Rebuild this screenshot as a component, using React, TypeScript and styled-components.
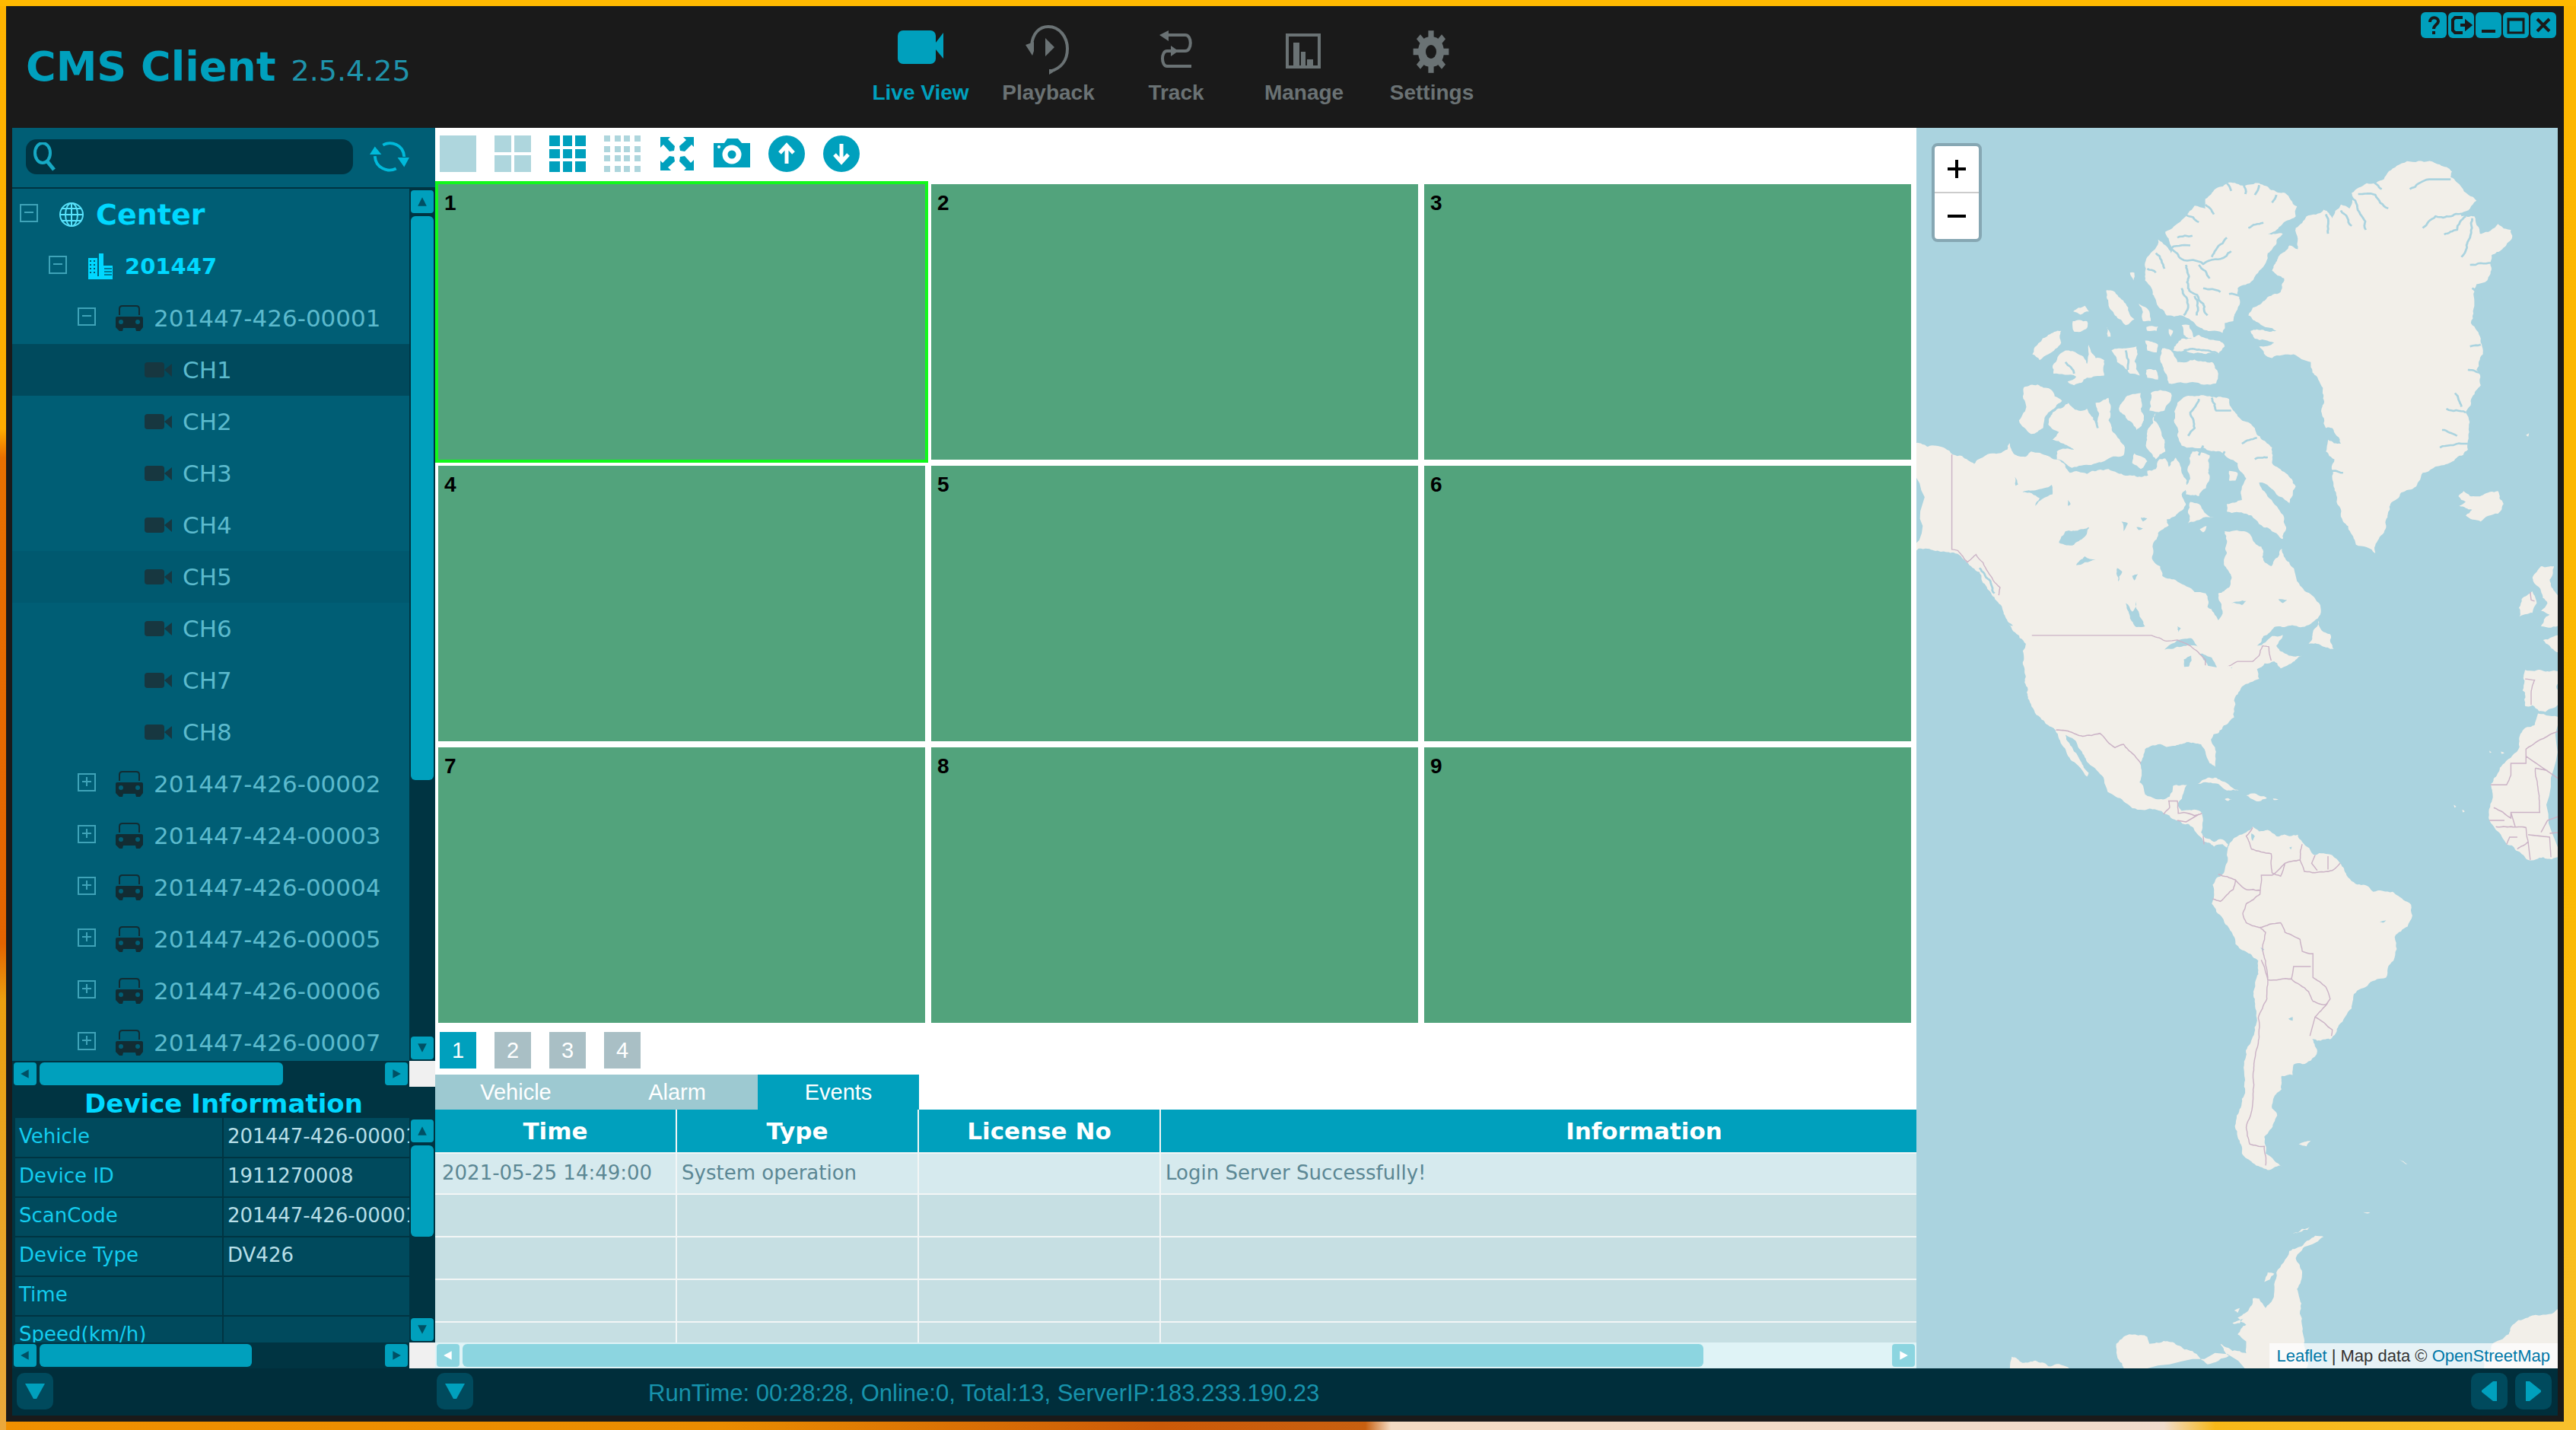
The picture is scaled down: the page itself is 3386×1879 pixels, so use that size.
import React, { useState } from "react";
import styled, { createGlobalStyle, css } from "styled-components";

const c = {
  frame: "#1a1a1a",
  panel: "#005e75",
  deep: "#003442",
  status: "#002e3b",
  row: "#004a5d",
  hover: "#00596f",
  accent: "#00a0bd",
  bright: "#00d8ff",
  soft: "#5cbacd",
  water: "#aad3df",
  land: "#f2efe9",
  grey: "#6a7274",
};

const verdana = `Verdana, "DejaVu Sans", sans-serif`;
const arial = `Arial, "Liberation Sans", sans-serif`;

const Global = createGlobalStyle`
  *, *::before, *::after { box-sizing: border-box; }
  html, body, #root { height: 100%; margin: 0; }
  body { overflow: hidden; font-family: ${arial}; }
  button { appearance: none; border: 0; margin: 0; padding: 0; background: none; color: inherit; font: inherit; cursor: pointer; }
  svg { display: block; flex: none; }
`;

/* ---------- shell ---------- */

const Desktop = styled.div`
  display: flex;
  height: 100vh;
  padding: 8px 16px 11px 8px;
  background:
    linear-gradient(#ffb900, #ffb900) top / 100% 8px no-repeat,
    linear-gradient(#fdb600 0%, #fbb800 60%, #f8c02c 100%) right / 16px 100% no-repeat,
    linear-gradient(#ffb400 0%, #ffac00 30%, #e87000 32%, #e46400 66%, #eaa010 70%, #eaa83c 100%) left / 8px 100% no-repeat,
    linear-gradient(90deg, #f09000 0%, #ea8c00 28%, #cc5a08 45%, #c86010 53%, #f4dcc4 54%, #f0dccc 84%, #f8b818 86%, #f8c02c 100%);
`;

const Window = styled.div`
  flex: 1;
  min-width: 0;
  display: flex;
  flex-direction: column;
  padding: 0 8px 8px;
  background: ${c.frame};
`;

const Header = styled.header`
  display: flex;
  align-items: flex-start;
  height: 160px;
`;

const Brand = styled.h1`
  flex: 0 0 1110px;
  display: flex;
  align-items: baseline;
  gap: 20px;
  margin: 0;
  padding: 48px 0 0 18px;
  color: ${c.accent};
  font: bold 54px/64px ${verdana};
  small { padding-top: 10px; font: 38px/44px ${verdana}; color: #1f93aa; }
`;

const Nav = styled.nav`
  display: flex;
  flex: 1;
`;

const NavItem = styled.button<{ $active?: boolean }>`
  width: 168px;
  padding-top: 18px;
  color: ${(p) => (p.$active ? c.accent : c.grey)};
  font: bold 28px/32px ${arial};
  svg { margin: 0 auto; }
`;

const WindowButtons = styled.div`
  display: flex;
  gap: 2px;
  padding: 8px 2px 0 0;
`;

const WindowButton = styled.button`
  width: 34px;
  height: 34px;
  border-radius: 6px;
  background: ${c.accent};
  color: ${c.frame};
`;

const Main = styled.main`
  flex: 1;
  min-height: 0;
  display: grid;
  grid-template-columns: 556px minmax(0, 1fr) 843px;
  grid-template-rows: minmax(0, 1fr);
`;

/* ---------- scroll bars ---------- */

type BarProps = { $vertical?: boolean; $light?: boolean };

const Bar = styled.div<BarProps>`
  display: flex;
  flex: none;
  gap: 4px;
  padding: 2px;
  background: ${(p) => (p.$light ? "#dff3f6" : c.deep)};
  flex-direction: ${(p) => (p.$vertical ? "column" : "row")};
  ${(p) => (p.$vertical ? css`width: 34px;` : css`height: 34px;`)}
`;

const BarButton = styled.button<{ $light?: boolean }>`
  display: grid;
  place-items: center;
  flex: none;
  width: 30px;
  height: 30px;
  border-radius: 4px;
  background: ${(p) => (p.$light ? "#8cd5e0" : c.accent)};
  color: ${(p) => (p.$light ? "#fff" : "#005064")};
`;

const Track = styled.div<BarProps>`
  flex: 1;
  display: flex;
  min-width: 0;
  min-height: 0;
  flex-direction: ${(p) => (p.$vertical ? "column" : "row")};
`;

const Thumb = styled.div<{ $light?: boolean; $share: number }>`
  flex: 0 0 ${(p) => p.$share}%;
  border-radius: 6px;
  background: ${(p) => (p.$light ? "#8cd5e0" : c.accent)};
`;

const Corner = styled.div`
  width: 34px;
  height: 34px;
  background: #f0f0f0;
`;

const Arrow = ({ dir }: { dir: "up" | "down" | "left" | "right" }) => {
  const d = { up: "M1 11 6 1l5 10z", down: "M1 1h10L6 11z", left: "M10 1v10L1 6z", right: "M2 1v10l9-5z" }[dir];
  return (
    <svg width="14" height="14" viewBox="0 0 12 12" fill="currentColor"><path d={d} /></svg>
  );
};

const ScrollBar = ({ vertical, light, share }: { vertical?: boolean; light?: boolean; share: number }) => (
  <Bar $vertical={vertical} $light={light}>
    <BarButton $light={light} aria-label={vertical ? "Scroll up" : "Scroll left"}><Arrow dir={vertical ? "up" : "left"} /></BarButton>
    <Track $vertical={vertical}><Thumb $light={light} $share={share} /></Track>
    <BarButton $light={light} aria-label={vertical ? "Scroll down" : "Scroll right"}><Arrow dir={vertical ? "down" : "right"} /></BarButton>
  </Bar>
);

/* ---------- sidebar ---------- */

const Sidebar = styled.aside`
  display: flex;
  flex-direction: column;
  min-height: 0;
  background: ${c.deep};
`;

const SearchRow = styled.div`
  display: flex;
  align-items: center;
  justify-content: space-between;
  height: 80px;
  padding: 0 34px 2px 18px;
  background: ${c.panel};
  border-bottom: 2px solid ${c.deep};
`;

const SearchBox = styled.label`
  display: flex;
  align-items: center;
  width: 430px;
  height: 46px;
  padding: 0 10px;
  gap: 8px;
  border-radius: 14px;
  background: ${c.deep};
  input { flex: 1; min-width: 0; border: 0; outline: 0; background: none; color: ${c.soft}; font: 26px/32px ${verdana}; }
`;

const ScrollPane = styled.div<{ $grow?: boolean }>`
  display: grid;
  grid-template-columns: minmax(0, 1fr) 34px;
  grid-template-rows: minmax(0, 1fr) 34px;
  ${(p) => (p.$grow ? css`flex: 1; min-height: 0;` : css`height: 329px;`)}
`;

const Tree = styled.ul`
  margin: 0;
  padding: 0;
  overflow: hidden;
  list-style: none;
  background: ${c.panel};
`;

const Node = styled.li<{ $level: number; $state?: string }>`
  display: flex;
  align-items: center;
  height: 68px;
  padding-left: ${(p) => 10 + p.$level * 38}px;
  white-space: nowrap;
  color: ${(p) => (p.$level < 2 ? c.bright : c.soft)};
  font: ${(p) => (p.$level === 0 ? "bold 38px" : p.$level === 1 ? "bold 29px" : "31px")} / 40px ${verdana};
  background: ${(p) => (p.$state === "selected" ? c.row : p.$state === "hover" ? c.hover : "transparent")};
`;

const Toggle = styled.button`
  width: 24px;
  height: 24px;
  margin: 0 26px 4px 0;
`;

const Spacer = styled.span`
  width: 50px;
`;

const IconSlot = styled.span`
  display: grid;
  place-items: center;
  width: 36px;
  margin-right: 14px;
`;

const DeviceTitle = styled.h2`
  margin: 0;
  height: 41px;
  color: ${c.bright};
  font: bold 34px/44px ${verdana};
  text-align: center;
  padding-right: 14px;
  padding-left: 14px;
`;

const Clip = styled.div`
  overflow: hidden;
  min-height: 0;
  padding-left: 4px;
`;

const DeviceTable = styled.table`
  width: 740px;
  table-layout: fixed;
  border-collapse: collapse;
  font: 26px/32px ${verdana};
  color: #b7dfe8;
  th { width: 273px; font-weight: normal; text-align: left; color: #13cdef; border-right: 2px solid ${c.deep}; }
  th, td { height: 52px; padding: 0 5px 4px; background: ${c.row}; border-bottom: 2px solid ${c.deep}; white-space: nowrap; }
`;

/* ---------- video area ---------- */

const Center = styled.section`
  display: flex;
  flex-direction: column;
  min-width: 0;
  min-height: 0;
  background: #fff;
`;

const Toolbar = styled.div`
  display: flex;
  gap: 24px;
  height: 70px;
  padding: 10px 6px 0;
`;

const Tool = styled.button<{ $dim?: boolean }>`
  width: 48px;
  height: 48px;
  color: ${(p) => (p.$dim ? "#aed6dd" : c.accent)};
`;

const Grid = styled.div`
  flex: 1;
  min-height: 0;
  display: grid;
  grid-template-columns: repeat(3, 1fr);
  grid-template-rows: repeat(3, 1fr);
  gap: 8px;
  padding: 4px 7px 4px 4px;
`;

const Cell = styled.div<{ $selected: boolean }>`
  padding: 8px;
  background: #52a37c;
  outline: ${(p) => (p.$selected ? "4px solid #12f81c" : "none")};
  color: #000;
  font: bold 28px/34px ${arial};
`;

const Pager = styled.div`
  display: flex;
  gap: 24px;
  height: 64px;
  padding: 8px 6px;
`;

const Page = styled.button<{ $active?: boolean }>`
  width: 48px;
  height: 48px;
  background: ${(p) => (p.$active ? c.accent : "#a9bfc5")};
  color: #fff;
  font: 29px/48px ${arial};
`;

const Tabs = styled.div`
  display: flex;
  height: 46px;
`;

const Tab = styled.button<{ $active?: boolean }>`
  width: 212px;
  background: ${(p) => (p.$active ? c.accent : "#9dc9d1")};
  color: #fff;
  font: 29px/46px ${arial};
`;

const EventsClip = styled.div`
  height: 306px;
  overflow: hidden;
`;

const EventsTable = styled.table`
  width: 2226px;
  table-layout: fixed;
  border-collapse: separate;
  border-spacing: 0;
  th, td { padding: 0 6px 2px; border-right: 2px solid #f3f6f6; border-bottom: 2px solid #f3f6f6; white-space: nowrap; }
  th { height: 58px; padding: 0 6px; background: ${c.accent}; color: #fff; font: bold 31px/40px ${verdana}; }
  td { height: 56px; background: #c6dfe3; color: #5b8794; font: 26px/32px ${verdana}; }
  tbody tr:first-child td { height: 54px; background: #d6eaee; }
  td:first-child { padding-left: 9px; }
`;

const Col = styled.col<{ $w: number }>`
  width: ${(p) => p.$w}px;
`;

/* ---------- map ---------- */

const MapPane = styled.section`
  position: relative;
  overflow: hidden;
  background: ${c.water};
  > svg { width: 100%; height: 100%; }
`;

const ZoomControl = styled.div`
  position: absolute;
  top: 20px;
  left: 20px;
  width: 66px;
  border: 4px solid #86a7b3;
  border-radius: 8px;
  background: #fff;
`;

const ZoomButton = styled.button`
  display: grid;
  place-items: center;
  width: 58px;
  height: 60px;
  & + & { height: 62px; border-top: 2px solid #ccc; }
`;

const Attribution = styled.div`
  position: absolute;
  right: 0;
  bottom: 0;
  padding: 0 10px;
  background: rgba(255, 255, 255, 0.7);
  color: #333;
  font: 22px/33px ${arial};
  a { color: #0078a8; text-decoration: none; }
`;

/* ---------- status bar ---------- */

const StatusBar = styled.footer`
  display: flex;
  align-items: flex-start;
  height: 62px;
  padding: 6px 8px 0 6px;
  background: ${c.status};
  color: #1793ac;
`;

const SideSlot = styled.div`
  width: 552px;
`;

const StatusText = styled.p`
  flex: 1;
  margin: 0;
  padding: 8px 0 0 230px;
  font: 31px/38px ${arial};
`;

const StatusButton = styled.button`
  display: grid;
  place-items: center;
  width: 48px;
  height: 48px;
  border-radius: 10px;
  background: ${c.row};
  color: ${c.accent};
  & + & { margin-left: 10px; }
`;

/* ---------- icons ---------- */

const VideoIcon = () => (
  <svg width="64" height="80" viewBox="0 0 64 80" fill="currentColor">
    <rect x="2" y="14" width="50" height="44" rx="7" /><path d="M50 30h2l10-13v34L52 39h-2z" />
  </svg>
);
const PlaybackIcon = () => (
  <svg width="64" height="80" viewBox="0 0 64 80" fill="currentColor">
    <g transform="translate(0 -4)">
      <path d="M10 38C11 22 20 13 32 13c15 0 25 14 25 29 0 15-8 26-23 30" fill="none" stroke="currentColor" strokeWidth="4" />
      <path d="M2 37 13 33v12l-2 6zM28 28l12 12-12 12zM33 69h5v4l-5 3z" />
    </g>
  </svg>
);
const TrackIcon = () => (
  <svg width="64" height="80" viewBox="0 0 64 80" fill="currentColor">
    <path d="M16 20h28c9 0 9 21 0 21H20c-8 0-8 20 0 20h32" fill="none" stroke="currentColor" strokeWidth="4" />
    <path d="M10 20 22 14v14zM25 34l10 7-10 7z" />
  </svg>
);
const ManageIcon = () => (
  <svg width="64" height="80" viewBox="0 0 64 80" fill="currentColor">
    <path d="M8 18h46v46H8zM12 22v38h38V22z" fillRule="evenodd" />
    <path d="M18 30h8v30h-8zM28 42h6v18h-6zM36 52h8v8h-8z" />
  </svg>
);
const SettingsIcon = () => (
  <svg width="64" height="80" viewBox="0 0 64 80" fill="currentColor">
    <g transform="translate(31 42)">
      {[0, 45, 90, 135].map((a) => <rect key={a} x="-4" y="-26" width="8" height="52" transform={`scale(.9 1.07) rotate(${a})`} />)}
      <path fillRule="evenodd" d="M0-20C11-20 17-11 17 0S11 20 0 20-17 11-17 0-11-20 0-20zM0-9c-4 0-7 4-7 9s3 9 7 9 7-4 7-9-3-9-7-9z" />
      <ellipse rx="7" ry="9" fill={c.frame} />
    </g>
  </svg>
);

const SearchIcon = () => (
  <svg width="30" height="38" viewBox="0 0 30 38" fill="none" stroke="#17a9c4" strokeWidth="4">
    <ellipse cx="12" cy="14" rx="10" ry="13" /><path d="m18 25 9 11" strokeWidth="5" />
  </svg>
);
const RefreshIcon = () => (
  <svg width="52" height="42" viewBox="0 0 54 42" fill="none" stroke="#00bada" strokeWidth="4">
    <path d="M18 5c11-6 28-1 29 16M36 37C24 43 8 36 7 20" /><path d="m0 18 7-11 9 11zM38 22l9 13 7-13z" fill="#00bada" stroke="none" />
  </svg>
);
const GlobeIcon = () => (
  <svg width="32" height="32" viewBox="0 0 32 32" fill="none" stroke="#58e2fb" strokeWidth="2">
    <circle cx="16" cy="16" r="15" /><ellipse cx="16" cy="16" rx="8" ry="15" /><path d="M16 1v30M1 16h30M4 8h24M4 24h24" />
  </svg>
);
const BuildingIcon = () => (
  <svg width="34" height="36" viewBox="0 0 34 36">
    <path d="M1 7h12v24h2V1h6v16h12v18H1z" fill={c.bright} />
    <path d="M4 10v20M9 10v20" stroke={c.panel} strokeWidth="2" strokeDasharray="2 3" />
    <path d="M22 21h10M22 25h10M22 29h10" stroke={c.panel} strokeWidth="1.5" />
  </svg>
);
const CarIcon = () => (
  <svg width="36" height="36" viewBox="0 0 36 36">
    <path d="M5 14V6c0-3 2-4 4-4h18c3 0 4 1 4 4v8" fill="none" stroke="#122c33" strokeWidth="2" />
    <path d="M0 18q0-2 2-2h32q2 0 2 2v12l-4 5h-5l-1-4H10l-1 4H5L0 30z" fill="#122c33" />
    <circle cx="7" cy="23" r="3" fill={c.panel} /><circle cx="29" cy="23" r="3" fill={c.panel} />
  </svg>
);
const CamIcon = () => (
  <svg width="36" height="24" viewBox="0 0 36 24" fill="#173740">
    <rect y="2" width="26" height="20" rx="4" /><path d="M26 12 36 4v17z" />
  </svg>
);
const BoxIcon = ({ open }: { open: boolean }) => (
  <svg width="24" height="24" viewBox="0 0 24 24" fill="none" stroke="#3fa3b8" strokeWidth="2">
    <path d="M1 1h22v22H1zM6 11h12" />{!open && <path d="M12 5v12" />}
  </svg>
);

const Tiles = ({ starts, sizes }: { starts: number[]; sizes: number[] }) => (
  <svg width="48" height="48" viewBox="0 0 48 48" fill="currentColor">
    {starts.flatMap((y, r) => starts.map((x, k) => <rect key={`${r}-${k}`} x={x} y={y} width={sizes[k]} height={sizes[r]} />))}
  </svg>
);
const ExpandIcon = () => (
  <svg width="48" height="48" viewBox="0 0 48 48" fill="currentColor">
    {[0, 90, 180, 270].map((a) => <path key={a} transform={`rotate(${a} 24 24)`} d="M2 2h13l-3 3 9 9-1 6-6 1-8-9-4 4z" />)}
  </svg>
);
const CameraIcon = () => (
  <svg width="48" height="48" viewBox="0 0 48 48">
    <path d="M0 10h14l4-6h14l5 6h11v32H0z" fill="currentColor" />
    <circle cx="24" cy="25" r="9" fill="none" stroke="#fff" strokeWidth="7" /><circle cx="7" cy="15" r="2" fill="#fff" />
  </svg>
);
const CircleArrow = ({ down }: { down?: boolean }) => (
  <svg width="48" height="48" viewBox="0 0 48 48">
    <circle cx="24" cy="24" r="24" fill="currentColor" />
    <path transform={down ? "rotate(180 24 24)" : undefined} d="M24 37V13M15 23l9-10 9 10" fill="none" stroke="#fff" strokeWidth="5" />
  </svg>
);

const windowGlyphs: [string, React.ReactNode][] = [
  ["Help", <path d="M12 13c0-8 11-7 11-1 0 4-6 5-6 10M17 25v4" />],
  ["Log out", <path d="M19 7H9l-3 3v14l3 3h10M16 17h12M24 13l5 4-5 4z" />],
  ["Minimize", <path d="M8 25h18" />],
  ["Maximize", <path d="M7 9h20v18H7zM7 10h20" />],
  ["Close", <path d="m9 9 16 16M25 9 9 25" />],
];

/* ---------- map drawing ---------- */

type Pt = [number, number];
const parse = (s: string): Pt[] => s.trim().split(/\s+/).map((p) => p.split(",").map(Number) as Pt);

/* Breaks every side of an outline into short jagged pieces so that it reads as a coast. */
const coast = (s: string, closed = true, amount = 0.13) => {
  const pts = parse(s);
  let seed = Math.abs(pts[0][0] * 31 + pts[0][1] * 17) + 7;
  const rand = () => {
    seed = (seed * 16807) % 2147483647;
    return (seed / 2147483647) * 2 - 1;
  };
  const out: Pt[] = [];
  const split = (a: Pt, b: Pt, depth: number) => {
    const dx = b[0] - a[0];
    const dy = b[1] - a[1];
    if (depth === 0 || Math.hypot(dx, dy) < 7) {
      out.push(b);
      return;
    }
    const k = rand() * amount;
    const m: Pt = [(a[0] + b[0]) / 2 - dy * k, (a[1] + b[1]) / 2 + dx * k];
    split(a, m, depth - 1);
    split(m, b, depth - 1);
  };
  out.push(pts[0]);
  const n = closed ? pts.length : pts.length - 1;
  for (let i = 0; i < n; i++) {
    const a = pts[i];
    const b = pts[(i + 1) % pts.length];
    /* surveyed borders stay straight over long distances */
    const straight = !closed && (a[0] === b[0] || a[1] === b[1]);
    split(a, b, straight ? 0 : 4);
  }
  return "M" + out.map((p) => `${p[0].toFixed(1)} ${p[1].toFixed(1)}`).join("L") + (closed ? "z" : "");
};

const northLand = [
  "20,825 33,828 60,838 100,842 118,858 140,862 168,882 178,870 195,860 215,855 245,845 250,828 262,858 290,862 300,850 340,862 375,880 390,905 430,908 455,898 480,895 500,905 540,912 572,912 570,900 590,895 598,870 612,868 620,890 636,866 645,880 650,905 662,925 665,945 650,960 660,985 640,1010 615,1025 620,1040 595,1060 583,1090 583,1130 600,1145 605,1170 640,1185 680,1212 706,1215 710,1250 735,1284 745,1260 735,1215 760,1200 765,1170 748,1140 755,1110 750,1055 795,1055 820,1085 835,1095 840,1130 858,1145 875,1120 883,1100 900,1135 915,1170 925,1195 958,1225 972,1245 972,1270 940,1298 865,1302 840,1325 825,1350 860,1325 885,1322 870,1350 890,1370 930,1375 880,1408 872,1395 865,1390 825,1410 830,1435 790,1455 780,1475 765,1480 775,1500 770,1525 735,1575 360,1575 350,1560 325,1540 300,1500 290,1470 285,1420 288,1345 265,1310 248,1290 235,1260 215,1225 195,1195 180,1160 150,1135 120,1110 90,1108 60,1100 20,1110",
  "865,370 900,320 920,330 915,275 940,245 980,228 1000,250 1020,215 1040,225 1045,185 1080,160 1120,150 1150,115 1200,103 1250,112 1278,130 1275,145 1300,170 1335,205 1320,225 1300,238 1300,245 1330,245 1345,290 1385,265 1415,280 1418,300 1395,330 1370,345 1370,380 1360,410 1335,420 1330,470 1322,520 1345,560 1350,600 1335,640 1345,680 1325,710 1310,750 1318,800 1315,845 1260,885 1210,905 1195,940 1135,985 1125,1040 1108,1075 1100,1112 1055,1090 1025,1030 1010,980 1000,920 1005,870 985,850 990,820 1020,830 1000,790 985,790 975,740 970,670 950,620 910,600 860,610 830,580 865,570 820,560 810,540 870,540 830,520 805,500 815,480 880,440 888,405 860,385",
  "565,390 570,350 595,305 625,340 625,320 612,285 650,255 680,218 705,225 705,200 760,158 830,160 890,185 918,220 915,245 880,270 850,290 885,290 850,340 830,385 815,410 780,430 785,460 770,515 750,520 745,545 720,540 690,530 650,500 615,500 590,460 580,430 565,410",
  "605,585 625,590 640,620 720,620 735,650 730,675 620,675 608,640",
  "630,590 650,560 690,550 745,570 750,580 735,600 660,590",
  "475,435 495,440 520,470 540,510 520,525 495,500 480,470",
  "550,470 575,490 578,515 560,515", "398,490 425,475 435,490 415,498", "397,515 430,515 428,535 400,542",
  "303,600 340,550 370,540 370,570 340,600 320,615",
  "350,630 380,590 410,600 430,625 435,575 450,610 470,615 470,655 430,660 400,680 385,670 405,658 352,650",
  "487,590 520,585 545,580 553,655 530,650 500,620", "565,565 595,575 592,595 570,590", "568,530 595,528 592,540 570,540",
  "568,640 590,640 595,665 570,660", "530,390 540,390 538,410", "620,535 630,540 625,555", "650,525 668,525 680,560 655,550", "472,525 485,555 478,555",
  "283,685 315,678 345,690 372,720 340,750 328,790 300,805 272,770 288,730",
  "340,780 350,750 385,725 410,745 430,740 445,765 455,780 450,725 480,712 485,740 480,770 490,800 518,840 515,860 470,875 440,885 395,892 360,870 360,850 400,845 350,820 365,800",
  "505,745 520,710 555,700 555,740 562,770 545,795 525,770", "578,700 600,692 625,700 610,745 575,745",
  "585,770 610,820 612,850 590,870 568,840 570,800 590,750",
  "632,770 640,725 660,708 680,708 720,710 760,715 770,745 820,790 860,840 860,880 915,940 900,985 870,960 830,930 888,1020 885,1075 840,1045 800,1010 755,1005 755,985 790,975 790,940 800,920 780,880 740,850 700,840 650,835 640,810",
  "665,1035 670,980 690,985 725,1020 700,1020 680,1030", "675,850 715,860 715,920 690,965 660,960 670,920", "760,900 780,905 775,925 760,925",
  "540,855 570,875 555,895 535,880", "692,1050 708,1042 700,1058",
  "945,1345 968,1285 975,1310 995,1320 1003,1358 975,1350", "248,1295 270,1305 298,1335 275,1325",
  "1293,965 1305,952 1320,965 1350,962 1385,952 1398,985 1385,1010 1345,1030 1310,1015 1325,1000 1295,990 1310,980",
  "1440,1230 1465,1210 1475,1240 1465,1265 1435,1275",
  "1465,1175 1485,1145 1515,1145 1505,1180 1520,1215 1530,1230 1530,1295 1485,1300 1505,1270 1485,1260 1500,1240 1485,1210 1470,1190",
  "1490,1335 1530,1320 1530,1368 1505,1350", "1448,1412 1470,1415 1530,1415 1530,1495 1495,1520 1480,1518 1465,1503 1448,1505 1448,1470 1442,1465",
  "1450,808 1457,803 1455,812",
];

const northWater = [
  "610,1360 640,1335 670,1330 688,1352 650,1352", "655,1385 672,1375 668,1400 665,1435 653,1430", "690,1370 720,1380 732,1405 712,1412 705,1390",
  "700,1440 740,1410 768,1405 740,1425", "520,1240 535,1262 545,1235 552,1270 565,1300 545,1302 530,1275", "365,1085 380,1055 435,1045 400,1090",
  "280,955 310,950 348,936 350,960 310,990 320,970", "405,1143 425,1120 450,1128 425,1135", "500,1150 512,1160 503,1185", "535,1170 548,1165 540,1182",
  "510,1030 525,1035 515,1055", "555,1020 570,1022 560,1030", "640,1300 648,1305 642,1315", "765,1240 800,1235 790,1245", "875,1230 895,1232 885,1240",
  "398,1440 408,1452 402,1452", "545,1045 560,1048 550,1052", "262,915 270,935 264,938", "385,975 392,985 386,990",
];

const fjords = [
  "625,330 650,355 700,368 740,355 765,335", "660,370 665,430 700,470 710,500", "620,330 670,320", "690,370 715,405", "720,350 745,315 755,300",
  "650,430 665,480 655,500", "700,430 740,440", "805,275 840,262", "590,340 610,380", "570,380 590,390", "755,160 765,180", "795,162 798,188", "830,165 820,190",
  "660,240 690,260", "705,215 725,240", "870,190 860,210", "640,300 675,295", "680,450 685,500", "760,445 785,450",
  "1060,188 1100,190 1130,225", "1045,195 1065,240 1078,280", "985,240 990,290", "1020,230 1045,270", "1180,175 1225,150 1275,150", "1090,155 1115,175",
  "1210,275 1240,245 1310,240", "1260,292 1290,280 1310,245", "1325,250 1320,300 1300,350", "1340,250 1345,290", "1320,370 1370,365", "1325,430 1350,460",
  "1250,840 1300,830 1315,830", "1255,795 1290,810", "1265,740 1310,750", "1285,700 1300,735", "1320,580 1345,575", "1315,640 1350,650",
  "690,715 670,750 680,790 665,810", "720,712 730,745 765,745", "790,830 825,815", "750,850 740,880", "820,870 850,865", "690,860 700,835",
  "655,590 735,600", "345,750 385,725", "445,765 455,790", "380,620 400,650", "520,590 525,640", "870,965 900,985", "1000,900 1025,905", "180,1150 215,1215",
];

const northBorders = [
  "116,858 116,1102 130,1105 152,1135 172,1115 200,1160 228,1200 225,1220", "302,1323 580,1323 615,1338 640,1335 670,1350 705,1385 705,1440 740,1412 780,1390 815,1390 830,1375 838,1350 852,1352 858,1388",
  "1448,1435 1470,1438 1462,1470 1462,1502", "1460,1212 1462,1232 1470,1235",
];

const southLand = [
  "285,-60 285,-5 300,25 320,60 345,82 358,95 375,130 395,160 415,175 430,193 434,185 415,160 400,140 382,115 380,105 400,115 420,145 440,170 470,200 478,225 515,245 560,263 590,262 615,272 640,285 665,292 685,312 700,328 725,340 745,335 755,342 758,335 745,325 725,330 705,322 695,310 697,270 680,262 650,265 640,250 655,225 662,210 630,212 622,235 590,240 565,230 552,205 553,165 565,135 595,125 635,128 665,120 695,125 705,140 715,165 728,172 728,150 718,115 725,100 750,85 772,68 768,45 778,20 785,0 760,-40",
  "758,340 780,318 800,310 815,298 830,308 850,305 870,318 900,318 920,315 930,330 960,358 1000,358 1018,375 1033,400 1050,415 1085,425 1095,435 1140,435 1165,452 1183,462 1186,485 1175,508 1145,530 1142,580 1125,615 1085,628 1050,650 1045,680 1015,715 995,745 965,748 950,742 965,770 950,790 910,798 908,820 882,822 882,850 862,875 860,890 872,905 855,935 842,950 845,985 865,1000 885,1012 850,1020 815,1005 790,985 780,950 778,905 790,870 795,800 815,740 820,660 828,600 828,580 775,545 745,490 720,460 725,435 722,420 745,398 757,370 757,345",
  "1530,67 1478,60 1470,85 1440,100 1435,130 1400,165 1368,210 1372,240 1365,285 1380,305 1405,335 1455,368 1490,362 1530,362",
  "934,1385 928,1300 918,1270 930,1235 915,1205 940,1180 980,1160 960,1158 900,1190 870,1235 865,1260 855,1300 845,1310 830,1290 815,1290 805,1315 780,1330 800,1345 780,1365 800,1380 800,1405 740,1385 760,1410 710,1428 675,1400 640,1388 575,1385 570,1370 515,1370 498,1385 500,1410 515,1445 940,1445",
  "255,1412 280,1425 310,1420 340,1432 380,1432 395,1445 252,1445", "1530,1308 1510,1322 1455,1330 1415,1350 1410,1365 1370,1388 1350,1445 1530,1445",
  "688,208 715,195 745,203 785,222 755,222 735,208 700,205", "800,232 820,228 848,238 820,243", "750,240 758,238 767,241 758,244", "862,239 875,241 864,242",
  "922,965 950,958 940,970", "1155,996 1175,1008 1165,1003", "842,1255 850,1235 865,1238 855,1250", "768,1342 795,1332 785,1342", "772,1315 785,1310 780,1320",
  "905,1155 955,1135 925,1150", "1072,1108 1088,1110 1075,1110", "1282,252 1288,256 1284,258", "1302,262 1308,266 1303,268", "1365,138 1370,142 1366,143", "1392,140 1400,143 1393,145",
];

const southWater = ["833,552 842,556 838,562", "898,702 908,698 908,706", "812,312 820,318 815,328", "1110,498 1125,495 1118,500", "900,342 906,340 904,346"];

const southBorders = [
  "358,95 420,108 460,102 495,132 515,125 555,165", "608,272 622,258 620,244 640,244 642,270 655,268 680,275 697,270", "640,285 660,288 690,272", "700,318 702,335",
  "815,300 800,318 812,345 858,355 860,395 880,402 890,375 925,368 930,335", "925,368 935,392 960,395 1000,390 1018,375", "960,358 952,375 965,390", "990,360 990,388",
  "890,375 860,400 835,400 832,440 800,460 792,480 800,500 830,510 880,500 890,520 925,535 930,560 955,565 955,615 985,635 995,660 985,672 955,665 945,645 905,618 910,592 950,592",
  "735,398 775,410 800,430 832,432", "775,412 770,430 740,455 722,450", "832,510 845,520 838,550 845,580 850,620 905,618", "835,578 850,620 848,660 828,700 830,740 818,800 815,880 800,930 808,965 842,970 845,1010",
  "995,660 960,698 1000,725 998,738", "960,698 948,738",
  "1530,95 1505,105 1450,135 1450,165 1415,165 1415,190 1405,210 1368,210", "1450,150 1530,200", "1472,175 1482,268 1415,268 1415,280 1375,258", "1472,175 1500,180",
  "1365,285 1400,285", "1380,298 1450,300 1455,330 1430,345", "1415,268 1425,298", "1455,315 1505,320 1508,362", "1530,275 1500,285 1485,310", "1530,310 1505,312", "1455,330 1460,368", "1405,335 1412,320 1430,320",
];

const Layer = ({ transform, land, water, rivers = [], borders }: { transform: string; land: string[]; water: string[]; rivers?: string[]; borders: string[] }) => (
  <g transform={transform}>
    <path d={land.map((s) => coast(s)).join("")} fill={c.land} />
    <path d={water.map((s) => coast(s)).join("")} fill={c.water} />
    <path d={rivers.map((s) => coast(s, false)).join("")} fill="none" stroke={c.water} strokeWidth="5" strokeLinejoin="round" />
    <path d={borders.map((s) => coast(s, false, s.length < 30 ? 0 : 0.06)).join("")} fill="none" stroke="#cbb3c6" strokeWidth="2.5" />
  </g>
);

const WorldMap = () => (
  <svg viewBox="0 0 843 1628" preserveAspectRatio="xMinYMin slice" role="img" aria-label="Map">
    <Layer transform="translate(-19 -9) scale(.565 .5102)" land={northLand} water={northWater} rivers={fjords} borders={northBorders} />
    <Layer transform="translate(-19 731) scale(.565 .6244)" land={southLand} water={southWater} borders={southBorders} />
  </svg>
);

/* ---------- data ---------- */

const nav = [
  ["Live View", VideoIcon], ["Playback", PlaybackIcon], ["Track", TrackIcon], ["Manage", ManageIcon], ["Settings", SettingsIcon],
] as const;

type Item = { label: string; level: number; icon: React.ReactNode; open?: boolean; state?: string };

const nodes: Item[] = [
  { label: "Center", level: 0, icon: <GlobeIcon />, open: true },
  { label: "201447", level: 1, icon: <BuildingIcon />, open: true },
  { label: "201447-426-00001", level: 2, icon: <CarIcon />, open: true },
  ...[1, 2, 3, 4, 5, 6, 7, 8].map((n) => ({
    label: `CH${n}`, level: 3, icon: <CamIcon />, state: n === 1 ? "selected" : n === 5 ? "hover" : undefined,
  })),
  ...["426-00002", "424-00003", "426-00004", "426-00005", "426-00006", "426-00007"].map((n) => ({
    label: `201447-${n}`, level: 2, icon: <CarIcon />, open: false,
  })),
];

const device = [
  ["Vehicle", "201447-426-00001"], ["Device ID", "1911270008"], ["ScanCode", "201447-426-00001"],
  ["Device Type", "DV426"], ["Time", ""], ["Speed(km/h)", ""],
];

const tools: [string, React.ReactNode, boolean][] = [
  ["1 window", <Tiles starts={[0]} sizes={[48]} />, true],
  ["4 windows", <Tiles starts={[0, 26]} sizes={[22, 22]} />, true],
  ["9 windows", <Tiles starts={[0, 18, 34]} sizes={[14, 12, 14]} />, false],
  ["16 windows", <Tiles starts={[0, 14, 26, 40]} sizes={[8, 8, 8, 8]} />, true],
  ["Full screen", <ExpandIcon />, false],
  ["Snapshot", <CameraIcon />, false],
  ["Previous", <CircleArrow />, false],
  ["Next", <CircleArrow down />, false],
];

const Triangle = ({ d }: { d: string }) => (
  <svg width="30" height="26" viewBox="0 0 30 26" fill="currentColor"><path d={d} /></svg>
);

export default function App() {
  const [cell, setCell] = useState(1);
  return (
    <Desktop>
      <Global />
      <Window>
        <Header>
          <Brand>CMS Client <small>2.5.4.25</small></Brand>
          <Nav>
            {nav.map(([label, Icon], i) => (
              <NavItem key={label} $active={i === 0}><Icon />{label}</NavItem>
            ))}
          </Nav>
          <WindowButtons>
            {windowGlyphs.map(([label, glyph]) => (
              <WindowButton key={label} aria-label={label}>
                <svg width="34" height="34" viewBox="0 0 34 34" fill="none" stroke="currentColor" strokeWidth={label === "Maximize" ? 3 : 4}>{glyph}</svg>
              </WindowButton>
            ))}
          </WindowButtons>
        </Header>

        <Main>
          <Sidebar>
            <SearchRow>
              <SearchBox><SearchIcon /><input type="text" aria-label="Search" /></SearchBox>
              <button aria-label="Refresh"><RefreshIcon /></button>
            </SearchRow>
            <ScrollPane $grow>
              <Tree>
                {nodes.map((n) => (
                  <Node key={n.label} $level={n.level} $state={n.state}>
                    {n.open === undefined ? <Spacer /> : <Toggle aria-label={n.open ? "Collapse" : "Expand"}><BoxIcon open={n.open} /></Toggle>}
                    <IconSlot>{n.icon}</IconSlot>
                    {n.label}
                  </Node>
                ))}
              </Tree>
              <ScrollBar vertical share={69} />
              <ScrollBar share={71} />
              <Corner />
            </ScrollPane>
            <DeviceTitle>Device Information</DeviceTitle>
            <ScrollPane>
              <Clip>
                <DeviceTable>
                  <tbody>
                    {device.map(([k, v]) => <tr key={k}><th scope="row">{k}</th><td>{v}</td></tr>)}
                  </tbody>
                </DeviceTable>
              </Clip>
              <ScrollBar vertical share={54} />
              <ScrollBar share={62} />
              <Corner />
            </ScrollPane>
          </Sidebar>

          <Center>
            <Toolbar>
              {tools.map(([label, icon, dim]) => <Tool key={label} $dim={dim} aria-label={label}>{icon}</Tool>)}
            </Toolbar>
            <Grid>
              {[1, 2, 3, 4, 5, 6, 7, 8, 9].map((n) => (
                <Cell key={n} $selected={n === cell} onClick={() => setCell(n)}>{n}</Cell>
              ))}
            </Grid>
            <Pager>
              {[1, 2, 3, 4].map((n) => <Page key={n} $active={n === 1}>{n}</Page>)}
            </Pager>
            <Tabs>
              <Tab>Vehicle</Tab><Tab>Alarm</Tab><Tab $active>Events</Tab>
            </Tabs>
            <EventsClip>
              <EventsTable>
                <colgroup><Col $w={318} /><Col $w={318} /><Col $w={318} /><Col $w={1272} /></colgroup>
                <thead><tr><th>Time</th><th>Type</th><th>License No</th><th>Information</th></tr></thead>
                <tbody>
                  <tr><td>2021-05-25 14:49:00</td><td>System operation</td><td /><td>Login Server Successfully!</td></tr>
                  {[1, 2, 3, 4].map((n) => <tr key={n}><td /><td /><td /><td /></tr>)}
                </tbody>
              </EventsTable>
            </EventsClip>
            <ScrollBar light share={87} />
          </Center>

          <MapPane>
            <WorldMap />
            <ZoomControl>
              <ZoomButton aria-label="Zoom in"><svg width="26" height="26" viewBox="0 0 26 26" stroke="#000" strokeWidth="4"><path d="M1 13h24M13 1v24" /></svg></ZoomButton>
              <ZoomButton aria-label="Zoom out"><svg width="26" height="26" viewBox="0 0 26 26" stroke="#000" strokeWidth="4"><path d="M1 13h24" /></svg></ZoomButton>
            </ZoomControl>
            <Attribution><a href="#leaflet">Leaflet</a> | Map data © <a href="#osm">OpenStreetMap</a></Attribution>
          </MapPane>
        </Main>

        <StatusBar>
          <SideSlot><StatusButton aria-label="Hide side panel"><Triangle d="M2 3h26L17 23h-4z" /></StatusButton></SideSlot>
          <StatusButton aria-label="Hide events"><Triangle d="M2 3h26L17 23h-4z" /></StatusButton>
          <StatusText>RunTime: 00:28:28, Online:0, Total:13, ServerIP:183.233.190.23</StatusText>
          <StatusButton aria-label="Previous panel"><Triangle d="M5 12 20 0h5v26h-5L5 14z" /></StatusButton>
          <StatusButton aria-label="Next panel"><Triangle d="M25 12 10 0H5v26h5l15-12z" /></StatusButton>
        </StatusBar>
      </Window>
    </Desktop>
  );
}
